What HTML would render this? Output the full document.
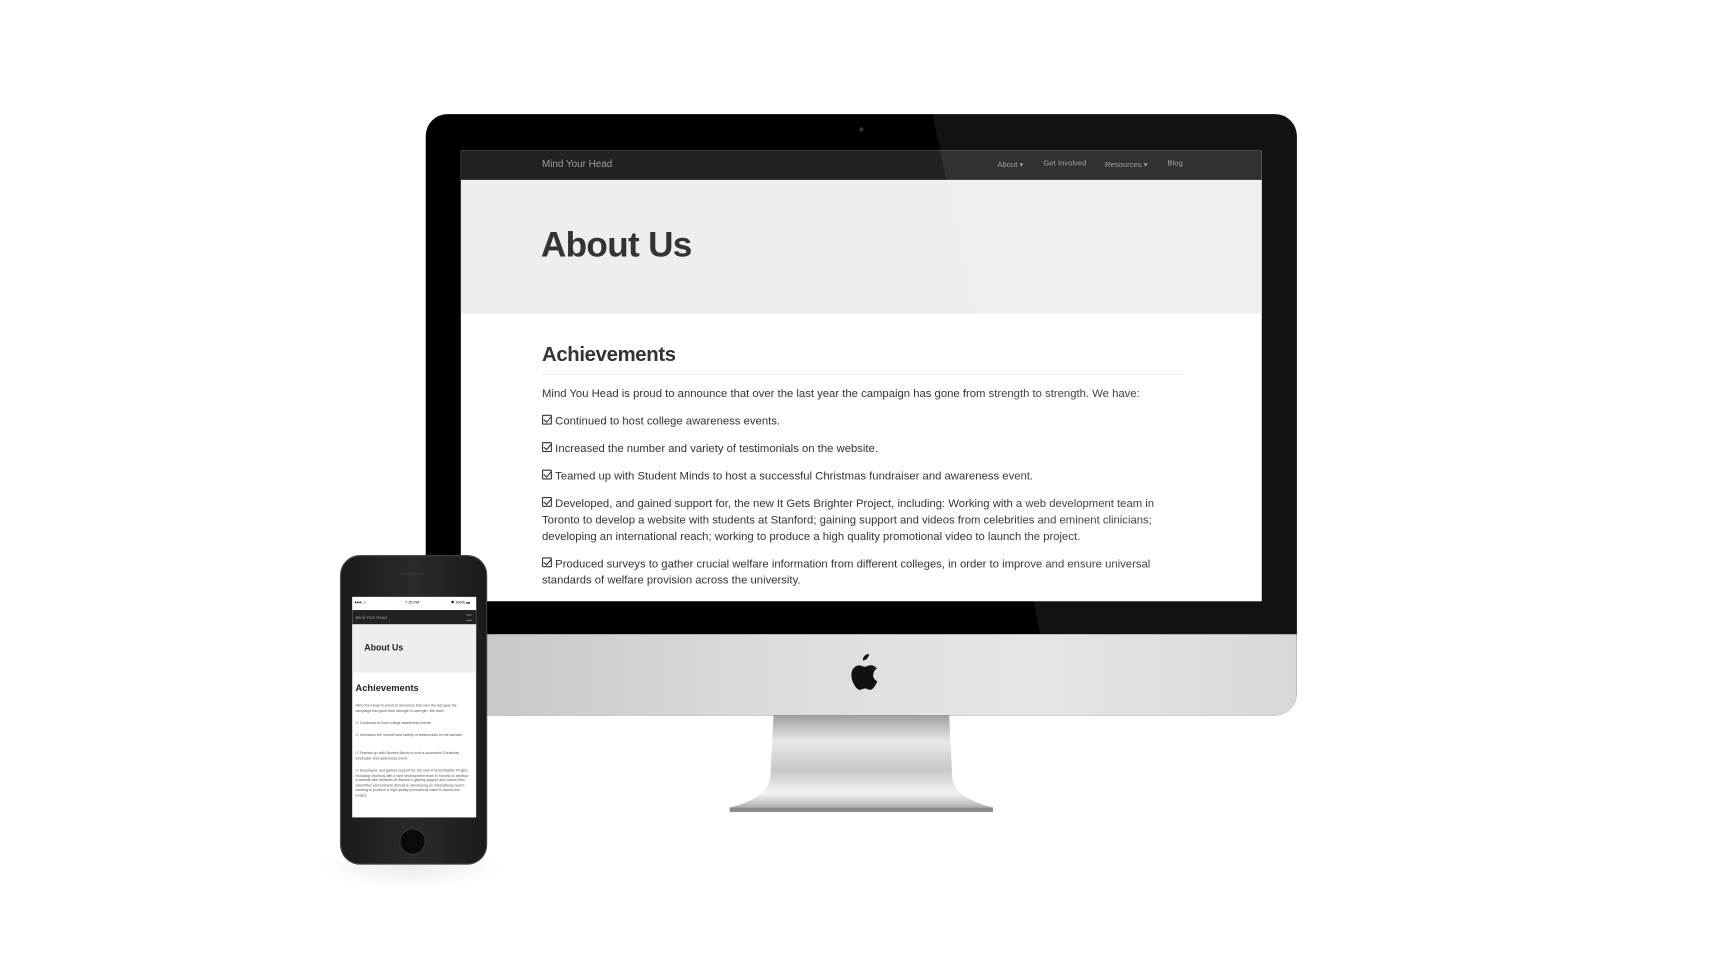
<!DOCTYPE html>
<html><head><meta charset="utf-8"><style>
html,body{margin:0;padding:0;background:#fff;overflow:hidden;width:1720px;height:972px}
#w{position:absolute;left:0;top:0;width:1560px;height:882px;transform:scale(1.0972);transform-origin:0 0;font-family:"Liberation Sans",sans-serif}
.a{position:absolute}
.mon{left:388px;top:104px;width:794px;height:548px;border-radius:20px;overflow:hidden;background:#000}
.chin{left:0;top:474px;width:794px;height:74px;background:linear-gradient(90deg,#c4c4c6,#dcdcde 40%,#e6e6e8 70%,#d8d8da)}
.scr{left:32px;top:33px;width:730px;height:411px;background:#fff;overflow:hidden}
.nav{left:0;top:0;width:730px;height:27px;background:#222}
.jum{left:0;top:27px;width:730px;height:122px;background:#eee}
.txt{font-size:10.3px;color:#333;line-height:15px;position:absolute;left:74px;width:590px}
.cb{display:inline-block;width:7px;height:7px;border:1px solid #333;border-radius:1px;margin-right:3px;position:relative;top:0px}
.cb:after{content:"";position:absolute;left:2px;top:-1px;width:3px;height:6px;border:solid #333;border-width:0 1.3px 1.3px 0;transform:rotate(40deg)}
.ps{left:321px;top:544px;width:113px;height:201px;background:#fff;overflow:hidden}
.pt{position:absolute;left:3px;font-size:3.3px;line-height:4.5px;color:#555;width:105px}
</style></head><body><div id="w">
<div class="a" style="left:290px;top:770px;width:170px;height:40px;border-radius:50%;background:radial-gradient(ellipse,rgba(0,0,0,.08),rgba(0,0,0,0) 70%)"></div>
<svg class="a" style="left:660px;top:650px" width="250" height="95">
<defs><linearGradient id="sg" x1="0" y1="0" x2="0" y2="1"><stop offset="0" stop-color="#9a9a9c"/><stop offset=".3" stop-color="#e8e8e8"/><stop offset=".6" stop-color="#c8c8ca"/><stop offset=".85" stop-color="#f4f4f4"/><stop offset="1" stop-color="#b0b0b0"/></linearGradient></defs>
<path d="M45 0 L205 0 L208 60 Q212 78 245 86 L5 86 Q38 78 42 60 Z" fill="url(#sg)"/>
<rect x="5" y="86" width="240" height="4" fill="#8a8a8a"/>
</svg>
<div class="a mon">
 <div class="a chin"></div>
 <div class="a" style="left:395px;top:12px;width:4px;height:4px;border-radius:50%;background:#333"></div>
 <div class="a scr">
  <div class="a nav"></div>
  <span class="a" style="left:74px;top:7px;font-size:9px;color:#9d9d9d">Mind Your Head</span>
  <span class="a" style="left:489px;top:9px;font-size:7px;color:#9d9d9d">About ▾</span>
  <span class="a" style="left:531px;top:9px;font-size:7px;color:#9d9d9d">Get Involved</span>
  <span class="a" style="left:587px;top:9px;font-size:7px;color:#9d9d9d">Resources ▾</span>
  <span class="a" style="left:644px;top:9px;font-size:7px;color:#9d9d9d">Blog</span>
  <div class="a jum"></div>
  <div class="a" style="left:73px;top:68px;font-size:32px;font-weight:bold;color:#333;letter-spacing:-.6px">About Us</div>
  <div class="a" style="left:74px;top:175px;font-size:18.5px;font-weight:bold;color:#333;letter-spacing:-.3px">Achievements</div>
  <div class="a" style="left:74px;top:204px;width:585px;height:1px;background:#eee"></div>
  <div class="txt" style="top:215px">Mind You Head is proud to announce that over the last year the campaign has gone from strength to strength. We have:</div>
  <div class="txt" style="top:240px"><span class="cb"></span>Continued to host college awareness events.</div>
  <div class="txt" style="top:265px"><span class="cb"></span>Increased the number and variety of testimonials on the website.</div>
  <div class="txt" style="top:290px"><span class="cb"></span>Teamed up with Student Minds to host a successful Christmas fundraiser and awareness event.</div>
  <div class="txt" style="top:315px"><span class="cb"></span>Developed, and gained support for, the new It Gets Brighter Project, including: Working with a web development team in Toronto to develop a website with students at Stanford; gaining support and videos from celebrities and eminent clinicians; developing an international reach; working to produce a high quality promotional video to launch the project.</div>
  <div class="txt" style="top:370px"><span class="cb"></span>Produced surveys to gather crucial welfare information from different colleges, in order to improve and ensure universal standards of welfare provision across the university.</div>
 </div>
 <div class="a" style="left:0;top:0;width:794px;height:474px;background:rgba(255,255,255,.07);clip-path:polygon(462px 0,794px 0,794px 474px,560px 474px)"></div>
 <svg class="a" style="left:381px;top:490px" width="34" height="40" viewBox="0 0 34 40"><path d="M23 2c0 3-2.5 6-5.5 6 -.5-3 2.5-6 5.5-6zM27 21c0-4 3-5.5 3.2-5.7-1.8-2.6-4.5-3-5.4-3-2.3-.2-4.5 1.4-5.6 1.4-1.2 0-3-1.3-4.9-1.3-2.5 0-4.8 1.5-6.1 3.7-2.6 4.5-.7 11.2 1.9 14.9 1.2 1.8 2.7 3.8 4.6 3.7 1.8-.1 2.5-1.2 4.7-1.2s2.8 1.2 4.7 1.1c2 0 3.2-1.8 4.4-3.6 1.4-2 1.9-4 2-4.1-.1 0-3.8-1.5-3.8-5.9z" fill="#111"/></svg>
</div>
<div class="a" style="left:310px;top:506px;width:134px;height:282px;border-radius:18px;background:linear-gradient(90deg,#1a1a1a,#2a2a2a 50%,#1a1a1a);box-shadow:0 0 0 1px #444 inset"></div>
<div class="a" style="left:365px;top:522px;width:22px;height:2px;border-radius:1px;background:#333"></div>
<div class="a" style="left:365px;top:756px;width:22px;height:22px;border-radius:50%;background:#0a0a0a;box-shadow:0 0 0 1px #333"></div>
<div class="a ps">
 <div class="a" style="left:0;top:0;width:113px;height:11px;background:#fff;font-size:3.5px;color:#000"><span class="a" style="left:2px;top:3px">●●●○○</span><span class="a" style="left:48px;top:3px">7:15 PM</span><span class="a" style="left:90px;top:3px">✱ 100% ▬</span></div>
 <div class="a" style="left:0;top:12px;width:113px;height:13px;background:#222"><span class="a" style="left:3px;top:4px;font-size:4px;color:#999">Mind Your Head</span><span class="a" style="left:104px;top:4px;width:5px;height:4px;border-top:1px solid #777;border-bottom:1px solid #777"></span></div>
 <div class="a" style="left:0;top:25px;width:113px;height:44px;background:#eee"></div>
 <div class="a" style="left:11px;top:42px;font-size:8px;font-weight:bold;color:#222">About Us</div>
 <div class="a" style="left:3px;top:78px;font-size:8.5px;font-weight:bold;color:#222">Achievements</div>
 <div class="pt" style="top:97px">Mind You Head is proud to announce that over the last year the campaign has gone from strength to strength. We have:</div>
 <div class="pt" style="top:113px">☑ Continued to host college awareness events.</div>
 <div class="pt" style="top:124px">☑ Increased the number and variety of testimonials on the website.</div>
 <div class="pt" style="top:140px">☑ Teamed up with Student Minds to host a successful Christmas fundraiser and awareness event.</div>
 <div class="pt" style="top:156px">☑ Developed, and gained support for, the new It Gets Brighter Project, including: Working with a web development team in Toronto to develop a website with students at Stanford; gaining support and videos from celebrities and eminent clinicians; developing an international reach; working to produce a high quality promotional video to launch the project.</div>
</div>
</div></body></html>
